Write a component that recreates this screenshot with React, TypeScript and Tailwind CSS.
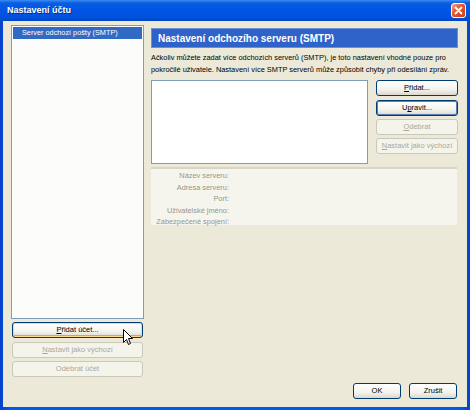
import React from 'react';

type Kind = 'normal' | 'hover' | 'default' | 'disabled';

function XpButton({ label, kind = 'normal', className = '' }: { label: React.ReactNode; kind?: Kind; className?: string }) {
  const styles: Record<Kind, string> = {
    normal: 'border-[#003c74] bg-[linear-gradient(180deg,#ffffff_0%,#f4f3ee_60%,#dcd8cc_100%)] text-black',
    hover:
      'border-[#003c74] bg-[linear-gradient(180deg,#ffffff_0%,#f4f3ee_60%,#dcd8cc_100%)] text-black shadow-[inset_0_0_0_1px_#fbd88a,inset_0_-1px_0_1px_#e5a33a]',
    default:
      'border-[#003c74] bg-[linear-gradient(180deg,#ffffff_0%,#f4f3ee_60%,#dcd8cc_100%)] text-black shadow-[inset_0_0_0_1px_#5a7fb8]',
    disabled: 'border-[#cac8bb] bg-[#f5f4ea] text-[#aca899]',
  };
  return (
    <div
      className={`flex h-[16px] items-center justify-center whitespace-nowrap rounded-[3px] border text-[7.5px] ${styles[kind]} ${className}`}
    >
      {label}
    </div>
  );
}

function Mn({ c, rest }: { c: string; rest: string }) {
  return (
    <span>
      <span className="underline underline-offset-1">{c}</span>
      {rest}
    </span>
  );
}

export default function App() {
  const fields = ['Název serveru:', 'Adresa serveru:', 'Port:', 'Uživatelské jméno:', 'Zabezpečené spojení:'];

  return (
    <div
      className="relative flex h-[410px] w-[470px] flex-col overflow-hidden bg-[linear-gradient(90deg,#0842c8_0%,#0058ee_2%,#0058ee_98%,#0842c8_100%)]"
      style={{ fontFamily: '"Liberation Sans", Arial, sans-serif' }}
    >
      {/* title bar */}
      <div className="flex h-[21px] shrink-0 items-center justify-between bg-[linear-gradient(180deg,#3c8cf8_0%,#0a5ee0_14%,#0055e5_45%,#0053e0_80%,#0046c4_100%)] pl-[7px] pr-[4px]">
        <span className="mt-[1px] text-[9px] font-bold text-white [text-shadow:1px_1px_0_#0a2a86]">Nastavení účtu</span>
        <div className="flex h-[15px] w-[15px] items-center justify-center rounded-[3px] border border-white bg-[linear-gradient(135deg,#f3a58a_0%,#e0542c_45%,#c8401c_100%)]">
          <svg width="9" height="9" viewBox="0 0 9 9">
            <path d="M1.5 1.5 L7.5 7.5 M7.5 1.5 L1.5 7.5" stroke="white" strokeWidth="1.8" strokeLinecap="round" />
          </svg>
        </div>
      </div>

      {/* client */}
      <div className="mx-[3px] mb-[3px] flex flex-1 gap-[7px] bg-[#ece9d8] pb-[8px] pl-[8px] pr-[9px] pt-[4px]">
        {/* left column */}
        <div className="flex w-[133px] flex-col pb-[22px]">
          <div className="flex-1 border border-[#7f9db9] bg-[#fcfdfa] p-[1px]">
            <div className="flex h-[12px] items-center bg-[#316ac5] pl-[9px] text-[7.3px] text-white">Server odchozí pošty (SMTP)</div>
          </div>
          <XpButton className="mx-[1px] mt-[3px]" kind="hover" label={<Mn c="P" rest="řidat účet..." />} />
          <XpButton className="mx-[1px] mt-[4px]" kind="disabled" label={<Mn c="N" rest="astavit jako výchozí" />} />
          <XpButton className="mx-[1px] mt-[3px]" kind="disabled" label="Odebrat účet" />
        </div>

        {/* right column */}
        <div className="flex flex-1 flex-col pt-[3px]">
          <div className="flex h-[20px] items-center border border-[#6d8fd6] bg-[#2f63c9] pl-[6px] text-[10px] font-bold text-white">
            Nastavení odchozího serveru (SMTP)
          </div>
          <p className="mt-[4px] text-[7.4px] leading-[12px] text-black">
            Ačkoliv můžete zadat více odchozích serverů (SMTP), je toto nastavení vhodné pouze pro pokročilé uživatele. Nastavení více SMTP serverů může způsobit chyby při odesílání zpráv.
          </p>
          <div className="mt-[4px] flex gap-[8px]">
            <div className="h-[84px] flex-1 border border-[#7f9db9] bg-white" />
            <div className="flex w-[82px] flex-col gap-[3px]">
              <XpButton label={<Mn c="P" rest="řidat..." />} />
              <XpButton kind="default" className="mt-[1px]" label={<span>U<span className="underline underline-offset-1">p</span>ravit...</span>} />
              <XpButton kind="disabled" label={<Mn c="O" rest="debrat" />} />
              <XpButton kind="disabled" label={<Mn c="N" rest="astavit jako výchozí" />} />
            </div>
          </div>
          <div className="mr-[1px] mt-[3px] h-[58px] border-t-2 border-[#d8d5c6] bg-[#f5f4ed] pt-[1px]">
            <div className="flex w-[78px] flex-col items-end text-[7.4px] leading-[11.5px] text-[#9a978a]">
              {fields.map((f) => (
                <div key={f} className="whitespace-nowrap">
                  {f}
                </div>
              ))}
            </div>
          </div>
          <div className="flex-1" />
          <div className="flex justify-end gap-[8px] pr-[1px]">
            <XpButton className="w-[48px]" label="OK" />
            <XpButton className="w-[48px]" label="Zrušit" />
          </div>
        </div>
      </div>

      {/* mouse cursor */}
      <svg className="absolute left-[123px] top-[329px]" width="11" height="17" viewBox="0 0 11 17">
        <path d="M0.5 0.5 L0.5 13.5 L3.5 10.5 L5.5 15.5 L7.5 14.5 L5.5 9.5 L9.5 9.5 Z" fill="white" stroke="black" strokeWidth="1" strokeLinejoin="round" />
      </svg>
    </div>
  );
}
